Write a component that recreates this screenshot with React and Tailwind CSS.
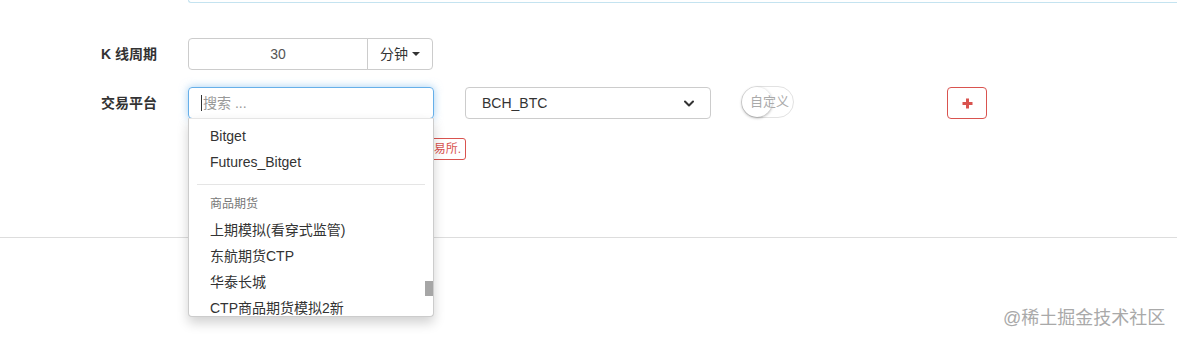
import React from 'react'

const font = { fontFamily: '"Liberation Sans", "Noto Sans CJK SC", sans-serif' }

function Label({ children }) {
  return (
    <div className="w-[157px] shrink-0 text-right text-[14px] font-bold text-[#333]">{children}</div>
  )
}

function Chevron() {
  return (
    <svg width="10" height="7" viewBox="0 0 10 7" className="text-[#333]">
      <path d="M1 1.5 L5 5.5 L9 1.5" fill="none" stroke="currentColor" strokeWidth="2" strokeLinecap="round" strokeLinejoin="round" />
    </svg>
  )
}

function DropdownItem({ children }) {
  return <div className="h-[26px] pl-[21px] flex items-center text-[14px] text-[#333] whitespace-nowrap">{children}</div>
}

export default function App() {
  return (
    <div className="relative w-[1177px] h-[341px] bg-white overflow-hidden" style={font}>
      {/* top panel edge */}
      <div className="ml-[188px] h-[3px] border-b border-l border-[#c4e3f0] rounded-bl-[4px]" />

      <div className="mt-[35px] flex flex-col">
        {/* K line period */}
        <div className="flex items-center h-[32px]">
          <Label>K 线周期</Label>
          <div className="ml-[31px] flex h-[32px]">
            <div className="w-[180px] border border-[#ccc] rounded-l-[4px] flex items-center justify-center text-[14px] text-[#555]">30</div>
            <div className="w-[66px] -ml-px border border-[#ccc] rounded-r-[4px] flex items-center justify-center gap-[4px] text-[14px] text-[#333]">
              分钟
              <span className="w-0 h-0 border-l-[4px] border-r-[4px] border-t-[4px] border-l-transparent border-r-transparent border-t-[#333]" />
            </div>
          </div>
        </div>

        {/* exchange row */}
        <div className="flex items-center h-[32px] mt-[17px]">
          <Label>交易平台</Label>
          <div className="ml-[31px] w-[246px] h-[32px] border border-[#66afe9] rounded-[4px] shadow-[0_0_8px_rgba(102,175,233,0.6)] flex items-center pl-[12px] text-[14px] text-[#999]">
            <span className="w-px h-[16px] bg-[#333] mr-px" />
            搜索 ...
          </div>
          <div className="ml-[31px] w-[246px] h-[32px] border border-[#ccc] rounded-[4px] flex items-center justify-between pl-[16px] pr-[16px] text-[14px] text-[#333]">
            BCH_BTC
            <Chevron />
          </div>
          <div className="relative ml-[30px] w-[53px] h-[32px] -mt-[2px] border border-[#e2e2e2] rounded-full flex items-center justify-center">
            <div className="absolute left-0 top-0 w-[30px] h-[30px] rounded-full bg-white shadow-[0_1px_3px_rgba(0,0,0,0.35)]" />
            <span className="relative text-[13px] text-[#aaa] ml-[4px]">自定义</span>
          </div>
          <div className="ml-[153px] w-[40px] h-[32px] border border-[#d9534f] rounded-[4px] flex items-center justify-center">
            <svg width="11" height="11" viewBox="0 0 11 11">
              <path d="M5.5 0.5 V10.5 M0.5 5.5 H10.5" stroke="#d9534f" strokeWidth="3" />
            </svg>
          </div>
        </div>

        {/* error message */}
        <div className="ml-[188px] mt-[19px] w-[278px] h-[22px] border border-[#d9534f] rounded-[3px] flex items-center justify-end pr-[4px] text-[12px] text-[#d9534f]">
          请至少添加一个交易所.
        </div>
      </div>

      {/* separator */}
      <div className="mt-[77px] border-t border-[#ddd]" />

      {/* dropdown */}
      <div className="absolute left-[188px] top-[118px] w-[246px] h-[199px] bg-white border border-[#ccc] border-t-[#e5e5e5] rounded-b-[4px] shadow-[0_6px_12px_rgba(0,0,0,0.18)] overflow-hidden">
        <div className="pt-[4px]">
          <DropdownItem>Bitget</DropdownItem>
          <DropdownItem>Futures_Bitget</DropdownItem>
          <div className="h-[19px] flex items-center px-[8px]">
            <div className="w-full border-t border-[#e5e5e5]" />
          </div>
          <div className="h-[20px] mb-[3px] pl-[21px] flex items-center text-[12px] text-[#777]">商品期货</div>
          <DropdownItem>上期模拟(看穿式监管)</DropdownItem>
          <DropdownItem>东航期货CTP</DropdownItem>
          <DropdownItem>华泰长城</DropdownItem>
          <DropdownItem>CTP商品期货模拟2新</DropdownItem>
        </div>
        <div className="absolute right-0 top-[162px] w-[8px] h-[15px] bg-[#a6a6a6]" />
      </div>

      {/* watermark */}
      <div className="absolute left-[1003px] top-[305px] text-[18px] text-[#a9a9a9] whitespace-nowrap">@稀土掘金技术社区</div>
    </div>
  )
}
